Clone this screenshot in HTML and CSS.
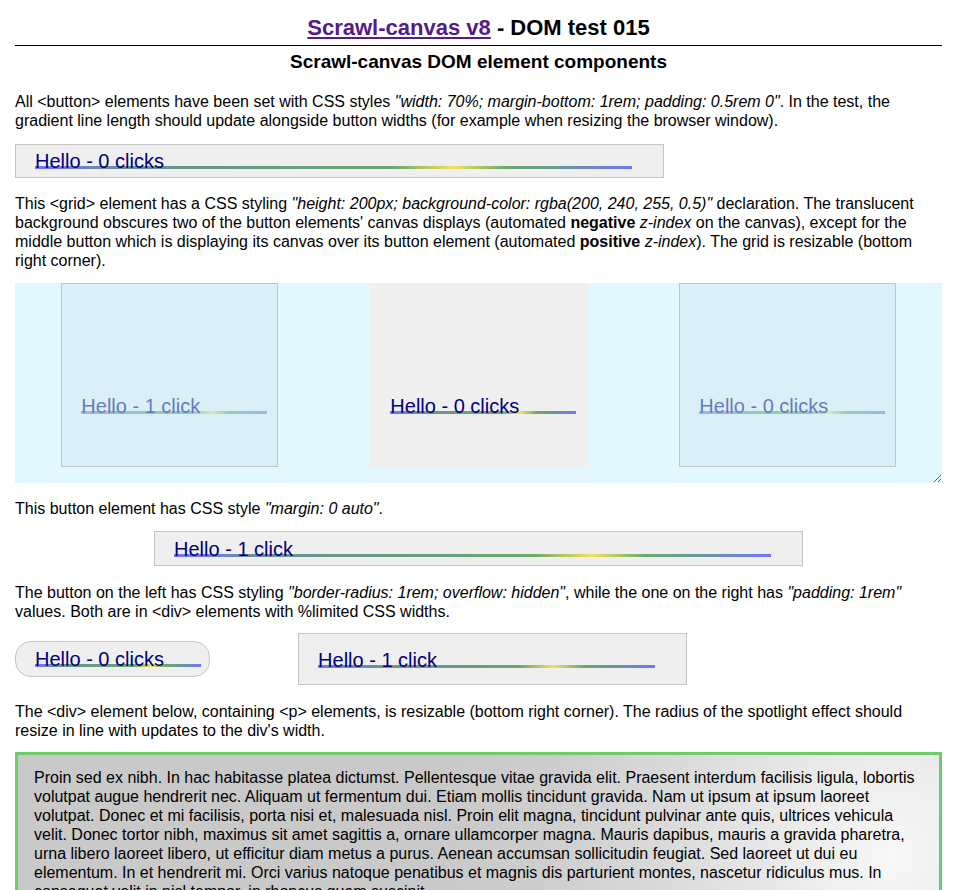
FILE: index.html
```html
<!DOCTYPE html>
<html lang="en">
<head>
<meta charset="utf-8">
<title>Scrawl-canvas v8 - DOM test 015</title>
<link rel="stylesheet" href="styles.css">
</head>
<body>
<h1 class="title"><a class="home" href="#">Scrawl-canvas v8</a> - DOM test 015</h1>
<hr class="rule">
<h2 class="subtitle">Scrawl-canvas DOM element components</h2>

<p class="text intro">All &lt;button&gt; elements have been set with CSS styles <em>"width: 70%; margin-bottom: 1rem; padding: 0.5rem 0"</em>. In the test, the gradient line length should update alongside button widths (for example when resizing the browser window).</p>

<div class="block"><button class="btn"><span class="cv">Hello - 0 clicks</span></button></div>

<p class="text before-grid">This &lt;grid&gt; element has a CSS styling <em>"height: 200px; background-color: rgba(200, 240, 255, 0.5)"</em> declaration. The translucent background obscures two of the button elements' canvas displays (automated <strong>negative</strong> <em>z-index</em> on the canvas), except for the middle button which is displaying its canvas over its button element (automated <strong>positive</strong> <em>z-index</em>). The grid is resizable (bottom right corner).</p>

<div class="grid">
  <button class="btn gbtn under"><span class="cv gcv">Hello - 1 click</span></button>
  <button class="btn gbtn over"><span class="cv gcv">Hello - 0 clicks</span></button>
  <button class="btn gbtn under"><span class="cv gcv">Hello - 0 clicks</span></button>
</div>

<p class="text">This button element has CSS style <em>"margin: 0 auto"</em>.</p>

<div class="block"><button class="btn centered"><span class="cv">Hello - 1 click</span></button></div>

<p class="text before-pair">The button on the left has CSS styling <em>"border-radius: 1rem; overflow: hidden"</em>, while the one on the right has <em>"padding: 1rem"</em> values. Both are in &lt;div&gt; elements with %limited CSS widths.</p>

<div class="pair">
  <div class="left"><button class="btn round"><span class="cv rcv">Hello - 0 clicks</span></button></div>
  <div class="right"><button class="btn padded"><span class="cv pcv">Hello - 1 click</span></button></div>
</div>

<p class="text before-spot">The &lt;div&gt; element below, containing &lt;p&gt; elements, is resizable (bottom right corner). The radius of the spotlight effect should resize in line with updates to the div's width.</p>

<div class="spot">
  <p class="spot-text">Proin sed ex nibh. In hac habitasse platea dictumst. Pellentesque vitae gravida elit. Praesent interdum facilisis ligula, lobortis volutpat augue hendrerit nec. Aliquam ut fermentum dui. Etiam mollis tincidunt gravida. Nam ut ipsum at ipsum laoreet volutpat. Donec et mi facilisis, porta nisi et, malesuada nisl. Proin elit magna, tincidunt pulvinar ante quis, ultrices vehicula velit. Donec tortor nibh, maximus sit amet sagittis a, ornare ullamcorper magna. Mauris dapibus, mauris a gravida pharetra, urna libero laoreet libero, ut efficitur diam metus a purus. Aenean accumsan sollicitudin feugiat. Sed laoreet ut dui eu elementum. In et hendrerit mi. Orci varius natoque penatibus et magnis dis parturient montes, nascetur ridiculus mus. In consequat velit in nisl tempor, in rhoncus quam suscipit.</p>
  <p class="spot-text">Nulla facilisi. Vestibulum ante ipsum primis in faucibus orci luctus et ultrices posuere cubilia curae; Integer at semper nisi, non dictum lorem. Sed eu ligula quis magna consequat tempus.</p>
</div>
</body>
</html>
```
FILE: styles.css
```css
html { scrollbar-width: none; }
body {
  margin: 0;
  padding: 0 15px 20px;
  font-family: "Liberation Sans", Arial, Helvetica, sans-serif;
  font-size: 16px;
  line-height: 19px;
  color: #000;
  background: #fff;
}
.title {
  margin: 0;
  padding-top: 14px;
  font-size: 22px;
  line-height: 28px;
  text-align: center;
  font-weight: bold;
}
.home { color: #551a8b; text-decoration: underline; }
.rule {
  margin: 3px 0 0;
  border: 0;
  border-top: 1px solid #000;
  height: 0;
}
.subtitle {
  margin: 0;
  padding-top: 5px;
  font-size: 19px;
  line-height: 22px;
  text-align: center;
  font-weight: bold;
}
.text { margin: 1px 0 13px; }
.intro { margin-top: 19px; margin-bottom: 14px; }
.before-grid { margin-top: 2px; }
.grid + .text { margin-top: 16px; }
.before-pair { margin-bottom: 12px; }
.before-spot { margin-top: 1px; margin-bottom: 12px; }

.block { display: block; }
.btn {
  display: block;
  width: 70%;
  margin: 0 0 16px;
  padding: 8px 0;
  border: 1px solid #c4c4c4;
  background: #efefef;
  text-align: left;
  font-family: "Liberation Sans", Arial, Helvetica, sans-serif;
  cursor: pointer;
}
.cv {
  display: block;
  height: 16px;
  margin: 0 31px 0 19px;
  font-size: 20px;
  line-height: 16px;
  color: #000080;
  white-space: nowrap;
  background-image: linear-gradient(to right, #7272ff 0%, #6a8f98 14%, #6a9d7e 40%, #6aa86e 60%, #f2e05c 70%, #6aa86e 79%, #6a9898 88%, #7272ff 100%);
  background-repeat: no-repeat;
  background-size: 100% 3px;
  background-position: 0 13px;
}
.centered { margin: 0 auto 17px; padding: 9px 0 8px; }

.grid {
  display: grid;
  grid-template-columns: repeat(3, 1fr);
  height: 200px;
  background-color: rgba(200, 240, 255, 0.5);
  resize: both;
  overflow: auto;
}
.gbtn {
  justify-self: center;
  align-self: stretch;
  position: relative;
}
.gcv { margin: 62px 10px 0 19px; }
.over { border-color: transparent; }
.under::after {
  content: "";
  position: absolute;
  top: 0; left: 0; right: 0; bottom: 0;
  background: rgba(200, 240, 255, 0.5);
}

.pair {
  display: flex;
  align-items: center;
  gap: 5px;
  margin-bottom: 1px;
}
.left { width: 30%; }
.right { width: 60%; }
.round {
  width: 70%;
  border-radius: 16px;
  overflow: hidden;
  padding: 9px 0;
}
.rcv { margin: 0 8px 0 19px; }
.padded {
  width: 70%;
  padding: 16px;
}
.pcv { margin: 2px 15px 0 3px; }

.spot {
  border: 3px solid #6ccd6c;
  padding: 13px 16px 4px;
  resize: both;
  overflow: hidden;
  background: radial-gradient(circle 460px at 95% 100px, #f8f8f8 0%, #ebebeb 22%, #dadada 50%, #cecece 75%, #c9c9c9 100%), #c9c9c9;
}
.spot-text { margin: 0 0 16px; }
```
